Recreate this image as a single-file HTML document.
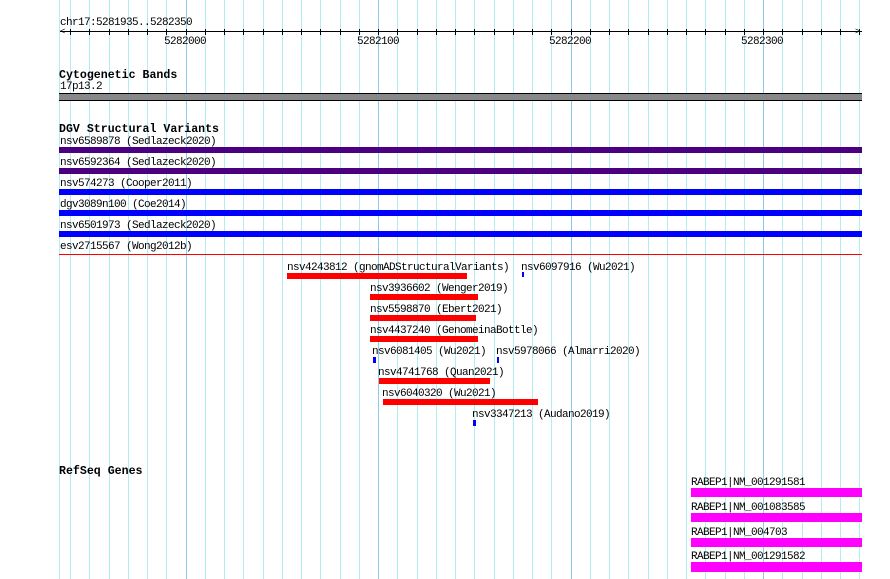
<!DOCTYPE html>
<html><head><style>
body{margin:0;width:890px;height:579px;background:#fff;position:relative;overflow:hidden;font-family:"Liberation Mono",monospace;font-size:10px;color:#000}
.a{position:absolute}
.t{position:absolute;line-height:10px;white-space:pre;font-size:11px;letter-spacing:-0.6px;padding-top:2px}
.h{position:absolute;line-height:12px;white-space:pre;font-weight:bold;font-size:11.6px;padding-top:3px}
.v{position:absolute;top:0;height:579px;width:1px;background:#b0eef2}
.d{background:#8ccbea}
.b{position:absolute}
</style></head><body>
<div id="g"></div>
<script>
var g=document.getElementById('g'),s='<div class="v" style="left:59px"></div>';
for(var i=0;i<42;i++){var x=Math.round(70+i*19.25);if(x>862)break;s+='<div class="v'+((i-6)%10==0?' d':'')+'" style="left:'+x+'px"></div>';}
for(var i=0;i<42;i++){var x=Math.round(70+i*19.25);if(x>862)break;s+='<div class="a" style="left:'+x+'px;top:29px;width:1px;height:6px;background:#000"></div>';}
g.innerHTML=s;
</script>
<div class="t" style="left:60px;top:16px">chr17:5281935..5282350</div>
<div class="a" style="left:60px;top:31px;width:802px;height:1px;background:#000"></div>
<div class="t" style="left:60px;top:25px;font-size:9px">&lt;</div>
<div class="t" style="left:855px;top:25px;font-size:9px">&gt;</div>
<div class="t" style="left:164px;top:35px">5282000</div>
<div class="t" style="left:357px;top:35px">5282100</div>
<div class="t" style="left:549px;top:35px">5282200</div>
<div class="t" style="left:741px;top:35px">5282300</div>

<div class="h" style="left:59px;top:67px">Cytogenetic Bands</div>
<div class="t" style="left:60px;top:80px">17p13.2</div>
<div class="a" style="left:59px;top:93px;width:803px;height:6px;background:#888;border-top:1px solid #000;border-bottom:1px solid #000"></div>

<div class="h" style="left:59px;top:121px">DGV Structural Variants</div>
<div class="t" style="left:60px;top:135px">nsv6589878 (Sedlazeck2020)</div>
<div class="b" style="left:59px;top:147px;width:803px;height:6px;background:#4b0082"></div>
<div class="t" style="left:60px;top:156px">nsv6592364 (Sedlazeck2020)</div>
<div class="b" style="left:59px;top:168px;width:803px;height:6px;background:#4b0082"></div>
<div class="t" style="left:60px;top:177px">nsv574273 (Cooper2011)</div>
<div class="b" style="left:59px;top:189px;width:803px;height:6px;background:#0000ff"></div>
<div class="t" style="left:60px;top:198px">dgv3089n100 (Coe2014)</div>
<div class="b" style="left:59px;top:210px;width:803px;height:6px;background:#0000ff"></div>
<div class="t" style="left:60px;top:219px">nsv6501973 (Sedlazeck2020)</div>
<div class="b" style="left:59px;top:231px;width:803px;height:6px;background:#0000ff"></div>
<div class="t" style="left:60px;top:240px">esv2715567 (Wong2012b)</div>
<div class="b" style="left:59px;top:254px;width:803px;height:1px;background:#f00"></div>

<div class="t" style="left:287px;top:261px">nsv4243812 (gnomADStructuralVariants)</div>
<div class="b" style="left:287px;top:273px;width:180px;height:6px;background:#f00"></div>
<div class="t" style="left:521px;top:261px">nsv6097916 (Wu2021)</div>
<div class="b" style="left:522px;top:272px;width:2px;height:5px;background:#00f"></div>
<div class="t" style="left:370px;top:282px">nsv3936602 (Wenger2019)</div>
<div class="b" style="left:370px;top:294px;width:108px;height:6px;background:#f00"></div>
<div class="t" style="left:370px;top:303px">nsv5598870 (Ebert2021)</div>
<div class="b" style="left:370px;top:315px;width:106px;height:6px;background:#f00"></div>
<div class="t" style="left:370px;top:324px">nsv4437240 (GenomeinaBottle)</div>
<div class="b" style="left:370px;top:336px;width:108px;height:6px;background:#f00"></div>
<div class="t" style="left:372px;top:345px">nsv6081405 (Wu2021)</div>
<div class="b" style="left:373px;top:357px;width:3px;height:6px;background:#00f"></div>
<div class="t" style="left:496px;top:345px">nsv5978066 (Almarri2020)</div>
<div class="b" style="left:497px;top:357px;width:2px;height:6px;background:#00f"></div>
<div class="t" style="left:378px;top:366px">nsv4741768 (Quan2021)</div>
<div class="b" style="left:379px;top:378px;width:111px;height:6px;background:#f00"></div>
<div class="t" style="left:382px;top:387px">nsv6040320 (Wu2021)</div>
<div class="b" style="left:383px;top:399px;width:155px;height:6px;background:#f00"></div>
<div class="t" style="left:472px;top:408px">nsv3347213 (Audano2019)</div>
<div class="b" style="left:473px;top:420px;width:3px;height:6px;background:#00f"></div>

<div class="h" style="left:59px;top:463px">RefSeq Genes</div>
<div class="t" style="left:691px;top:476px">RABEP1|NM_001291581</div>
<div class="b" style="left:691px;top:488px;width:171px;height:9px;background:#f0f"></div>
<div class="t" style="left:691px;top:501px">RABEP1|NM_001083585</div>
<div class="b" style="left:691px;top:513px;width:171px;height:9px;background:#f0f"></div>
<div class="t" style="left:691px;top:526px">RABEP1|NM_004703</div>
<div class="b" style="left:691px;top:538px;width:171px;height:9px;background:#f0f"></div>
<div class="t" style="left:691px;top:550px">RABEP1|NM_001291582</div>
<div class="b" style="left:691px;top:562px;width:171px;height:10px;background:#f0f"></div>
</body></html>
